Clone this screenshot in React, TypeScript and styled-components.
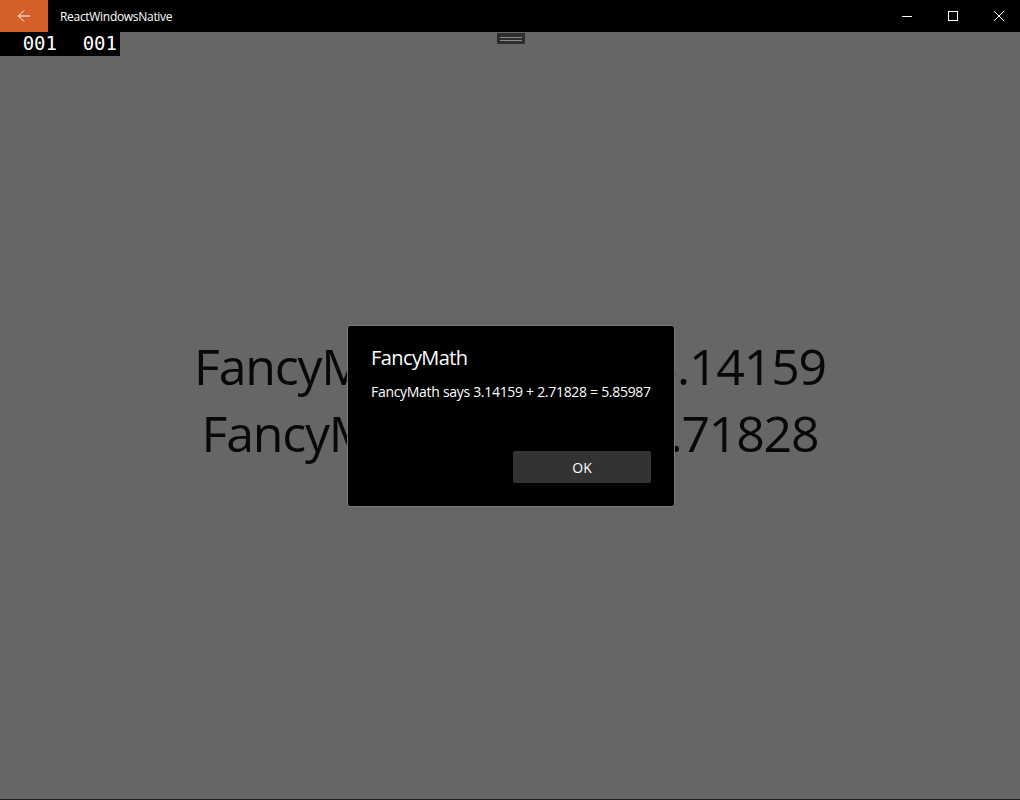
import React from "react";
import styled, { createGlobalStyle } from "styled-components";

const Global = createGlobalStyle`
  html, body { margin: 0; padding: 0; background: #666666; }
  body { font-family: "Open Sans", "Noto Sans", sans-serif; overflow: hidden; }
`;

const Window = styled.div`
  width: 1020px;
  height: 800px;
  display: flex;
  flex-direction: column;
  background: #666666;
  position: relative;
  overflow: hidden;
`;

const TitleBar = styled.div`
  height: 32px;
  flex: 0 0 32px;
  background: #000000;
  display: flex;
  align-items: center;
`;

const BackButton = styled.div`
  width: 48px;
  height: 32px;
  background: #d3602b;
  display: flex;
  align-items: center;
  justify-content: center;
`;

const AppTitle = styled.div`
  margin-left: 12px;
  color: #ffffff;
  font-size: 12px;
  letter-spacing: -0.3px;
  flex: 1;
`;

const CaptionButtons = styled.div`
  display: flex;
  height: 32px;
  margin-right: -2px;
`;

const CaptionButton = styled.div`
  width: 46px;
  height: 32px;
  display: flex;
  align-items: center;
  justify-content: center;
`;

const Content = styled.div`
  flex: 1;
  position: relative;
  display: flex;
  flex-direction: column;
`;

const TopStrip = styled.div`
  height: 24px;
  display: flex;
  align-items: flex-start;
  position: relative;
`;

const Counters = styled.div`
  width: 120px;
  height: 24px;
  background: #000000;
  display: flex;
`;

const Counter = styled.div`
  width: 60px;
  box-sizing: border-box;
  padding-right: 3px;
  text-align: right;
  color: #ffffff;
  font-family: "DejaVu Sans Mono", "Liberation Mono", monospace;
  font-size: 19px;
  line-height: 22px;
`;

const DragHandle = styled.div`
  position: absolute;
  left: 497px;
  top: 1px;
  width: 28px;
  height: 11px;
  background: #2d2d2d;
  display: flex;
  flex-direction: column;
  justify-content: center;
  align-items: center;
  gap: 2px;
`;

const HandleLine = styled.div`
  width: 22px;
  height: 1px;
  background: #8a8a8a;
`;

const Center = styled.div`
  flex: 1;
  display: flex;
  flex-direction: column;
  align-items: center;
  justify-content: center;
  padding-bottom: 56px;
`;

const BigLine = styled.div`
  font-family: "Open Sans", "Noto Sans", sans-serif;
  font-size: 50px;
  line-height: 67px;
  letter-spacing: -1.2px;
  color: #080808;
  white-space: nowrap;
`;

const BottomLine = styled.div`
  height: 1px;
  flex: 0 0 1px;
  background: #1f1f1f;
`;

const Dialog = styled.div`
  position: absolute;
  left: 347px;
  top: 325px;
  width: 328px;
  height: 182px;
  box-sizing: border-box;
  background: #000000;
  border: 1px solid #7a7a7a;
  border-radius: 3px;
  padding: 18px 23px 23px 23px;
  display: flex;
  flex-direction: column;
`;

const DialogTitle = styled.div`
  color: #ffffff;
  font-size: 20px;
  line-height: 28px;
  letter-spacing: -0.6px;
`;

const DialogBody = styled.div`
  color: #ffffff;
  font-size: 14px;
  line-height: 20px;
  letter-spacing: -0.3px;
  margin-top: 10px;
  white-space: nowrap;
  flex: 1;
`;

const DialogButtons = styled.div`
  display: flex;
  justify-content: flex-end;
`;

const OkButton = styled.div`
  width: 138px;
  height: 32px;
  background: #333333;
  border-radius: 2px;
  color: #ffffff;
  font-size: 14px;
  display: flex;
  align-items: center;
  justify-content: center;
`;

export default function App() {
  return (
    <>
      <Global />
      <Window>
        <TitleBar>
          <BackButton>
            <svg width="14" height="14" viewBox="0 0 14 14" fill="none" stroke="#fff" strokeWidth="1">
              <path d="M13 7H1.5M7 1.5L1.5 7L7 12.5" />
            </svg>
          </BackButton>
          <AppTitle>ReactWindowsNative</AppTitle>
          <CaptionButtons>
            <CaptionButton>
              <svg width="10" height="10" viewBox="0 0 10 10">
                <path d="M0 5.5H10" stroke="#fff" strokeWidth="1" />
              </svg>
            </CaptionButton>
            <CaptionButton>
              <svg width="10" height="10" viewBox="0 0 10 10">
                <rect x="0.5" y="0.5" width="9" height="9" fill="none" stroke="#fff" strokeWidth="1" />
              </svg>
            </CaptionButton>
            <CaptionButton>
              <svg width="10" height="10" viewBox="0 0 10 10">
                <path d="M0 0L10 10M10 0L0 10" stroke="#fff" strokeWidth="1" />
              </svg>
            </CaptionButton>
          </CaptionButtons>
        </TitleBar>
        <Content>
          <TopStrip>
            <Counters>
              <Counter>001</Counter>
              <Counter>001</Counter>
            </Counters>
            <DragHandle>
              <HandleLine />
              <HandleLine />
            </DragHandle>
          </TopStrip>
          <Center>
            <BigLine>FancyMath says PI = 3.14159</BigLine>
            <BigLine>FancyMath says E = 2.71828</BigLine>
          </Center>
          <BottomLine />
        </Content>
        <Dialog>
          <DialogTitle>FancyMath</DialogTitle>
          <DialogBody>FancyMath says 3.14159 + 2.71828 = 5.85987</DialogBody>
          <DialogButtons>
            <OkButton>OK</OkButton>
          </DialogButtons>
        </Dialog>
      </Window>
    </>
  );
}
